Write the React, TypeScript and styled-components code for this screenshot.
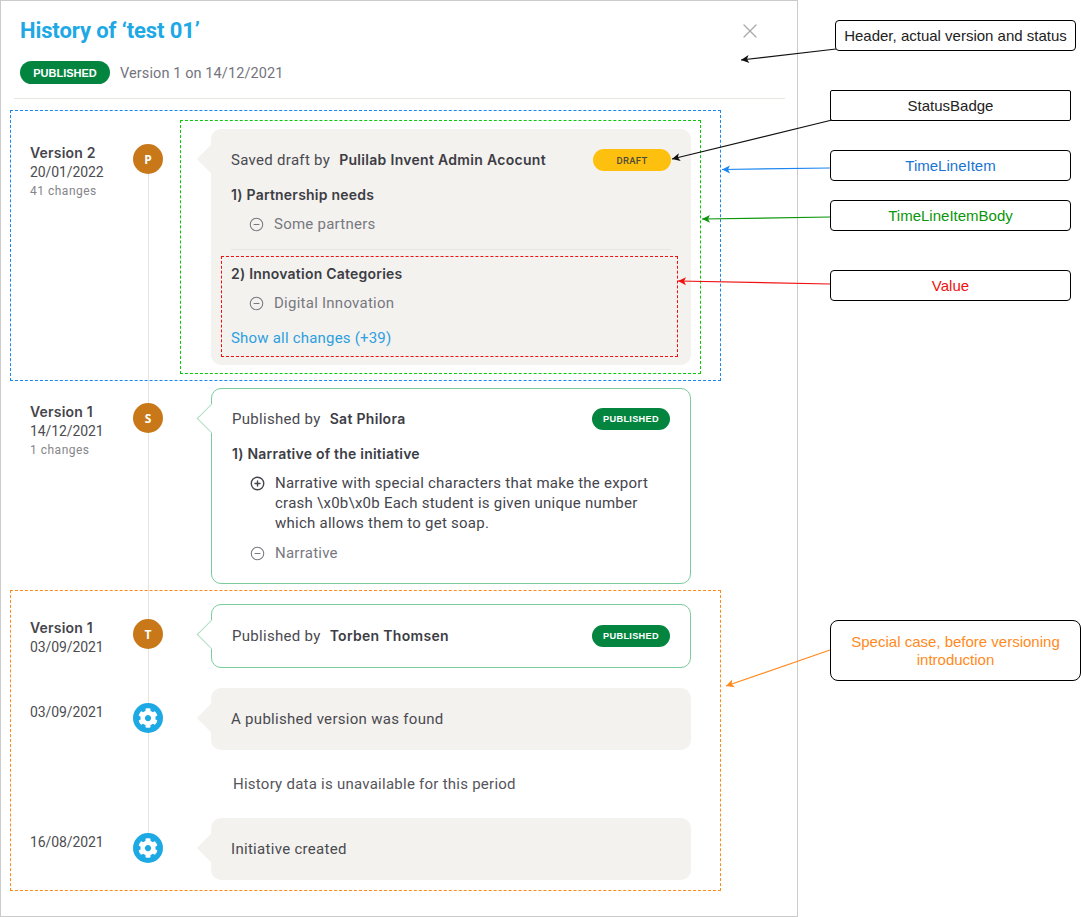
import React from "react";
import styled, { createGlobalStyle } from "styled-components";
import { CircleMinus, CirclePlus, X } from "lucide-react";
import { FaCog } from "react-icons/fa";

const Global = createGlobalStyle`
  html, body { margin: 0; padding: 0; background: #fff; }
  * { box-sizing: border-box; }
`;

const Page = styled.div`
  position: relative;
  width: 1081px;
  height: 917px;
  overflow: hidden;
  background: #fff;
  font-family: Roboto, "Liberation Sans", sans-serif;
  color: #3d3d45;
`;

const Panel = styled.section`
  width: 798px;
  height: 917px;
  box-shadow: inset 0 0 0 1px #cbcbcb;
  padding: 15px 13px 0 14px;
`;

const Header = styled.header`
  height: 84px;
  padding: 0 28px 0 6px;
  border-bottom: 1px solid #e8e6e0;
`;

const TitleRow = styled.div`
  display: flex;
  align-items: center;
  justify-content: space-between;
  height: 32px;
`;

const Title = styled.h1`
  margin: 0;
  font-size: 22px;
  line-height: 32px;
  font-weight: 700;
  letter-spacing: -0.1px;
  color: #20a8e6;
`;

const CloseIcon = styled(X)`
  color: #a9a9a9;
  margin-right: -5px;
`;

const StatusLine = styled.div`
  display: flex;
  align-items: center;
  gap: 10px;
  margin-top: 14px;
`;

const StatusText = styled.span`
  padding-top: 2px;
  font-size: 14.5px;
  letter-spacing: 0.1px;
  color: #74747e;
`;

const Badge = styled.span<{ $draft?: boolean; $large?: boolean }>`
  display: inline-flex;
  align-items: center;
  justify-content: center;
  flex: none;
  width: ${(p) => (p.$large ? "90px" : "78px")};
  height: ${(p) => (p.$large ? "23px" : "22px")};
  border-radius: 12px;
  font-size: ${(p) => (p.$large ? "11px" : p.$draft ? "9.5px" : "9.2px")};
  font-weight: ${(p) => (p.$draft ? 500 : 700)};
  font-family: ${(p) => (p.$draft ? "Roboto, sans-serif" : '"Liberation Sans", sans-serif')};
  background: ${(p) => (p.$draft ? "#fec00f" : "#03853f")};
  color: ${(p) => (p.$draft ? "#4a4a3a" : "#fff")};
`;

const Timeline = styled.div`
  position: relative;
  display: flex;
  flex-direction: column;
  gap: 20px;
  margin: 30px 0 0 16px;
`;

const Line = styled.div`
  position: absolute;
  left: 118px;
  top: 30px;
  bottom: 40px;
  width: 1px;
  background: #e5e3dc;
`;

const Row = styled.article<{ $extraTop?: number }>`
  position: relative;
  display: grid;
  grid-template-columns: 103px 30px 480px;
  align-items: start;
  margin-top: ${(p) => p.$extraTop ?? 0}px;
`;

const Meta = styled.div`
  padding-top: 14px;
`;

const VersionLabel = styled.div`
  font-family: Inter, Roboto, sans-serif;
  font-size: 14px;
  font-weight: 600;
  line-height: 19px;
  letter-spacing: 0.2px;
  color: #45454c;
`;

const DateLabel = styled.div`
  font-size: 14px;
  line-height: 20px;
  letter-spacing: -0.1px;
  color: #4d4d52;
`;

const Changes = styled.div`
  font-size: 12px;
  line-height: 18px;
  letter-spacing: 0.5px;
  color: #85858a;
`;

const Avatar = styled.div<{ $system?: boolean }>`
  display: flex;
  align-items: center;
  justify-content: center;
  width: 30px;
  height: 30px;
  margin-top: 15px;
  border-radius: 50%;
  background: ${(p) => (p.$system ? "#1ca9e4" : "#c87818")};
  color: #fff;
  font-size: 12px;
  font-weight: 700;
  font-family: "Open Sans", sans-serif;
`;

const Card = styled.div<{ $outlined?: boolean }>`
  position: relative;
  grid-column: 3;
  display: flex;
  flex-direction: column;
  justify-content: center;
  width: 480px;
  min-height: ${(p) => (p.$outlined ? "64px" : "62px")};
  margin-left: 48px;
  padding: ${(p) => (p.$outlined ? "19px 20px 20px" : "20px 20px 17px")};
  border-radius: 10px;
  background: ${(p) => (p.$outlined ? "#fff" : "#f3f2ee")};
  border: ${(p) => (p.$outlined ? "1px solid #7ccb9f" : "0")};

  &::before {
    content: "";
    position: absolute;
    left: ${(p) => (p.$outlined ? "-11px" : "-10px")};
    top: ${(p) => (p.$outlined ? "19px" : "20px")};
    width: 20px;
    height: 20px;
    transform: rotate(45deg);
    background: ${(p) => (p.$outlined ? "#fff" : "#f3f2ee")};
    border-left: ${(p) => (p.$outlined ? "1px solid #a9dcbf" : "0")};
    border-bottom: ${(p) => (p.$outlined ? "1px solid #a9dcbf" : "0")};
  }
`;

const NoteCard = styled(Card)`
  padding: 0 20px;
`;

const CardHead = styled.div`
  position: relative;
  display: flex;
  align-items: center;
  justify-content: space-between;
  min-height: 22px;
  font-size: 15px;
  letter-spacing: 0.3px;
  color: #4a4a50;
`;

const Author = styled.b`
  margin-left: 5px;
  font-family: Inter, Roboto, sans-serif;
  font-size: 14px;
  font-weight: 600;
  letter-spacing: 0.3px;
  color: #3d3d45;
`;

const Change = styled.div<{ $divided?: boolean }>`
  ${(p) => (p.$divided ? "margin-top: 15px; border-top: 1px solid #e8e6e0; padding-top: 14px;" : "margin-top: 14px;")}
`;

const ChangeTitle = styled.div`
  font-family: Inter, Roboto, sans-serif;
  font-size: 14px;
  font-weight: 600;
  line-height: 20px;
  letter-spacing: 0.22px;
  color: #3d3d45;
`;

const ValueRow = styled.div<{ $removed?: boolean }>`
  display: flex;
  gap: 10px;
  margin-top: 9px;
  padding-left: 18px;
  font-size: 15px;
  line-height: 20px;
  letter-spacing: 0.25px;
  color: ${(p) => (p.$removed ? "#787881" : "#45454d")};

  svg {
    flex: none;
    margin-top: 3px;
  }

  & + & {
    margin-top: 10px;
  }
`;

const ShowAll = styled.a`
  display: block;
  margin-top: 15px;
  font-size: 15px;
  line-height: 20px;
  letter-spacing: 0.2px;
  color: #2d9fe0;
`;

const Plain = styled.div`
  grid-column: 3;
  margin-left: 70px;
  font-size: 15px;
  line-height: 28px;
  letter-spacing: 0.25px;
  color: #55555b;
`;

const Frame = styled.div<{ $x: number; $y: number; $w: number; $h: number; $c: string }>`
  position: absolute;
  left: ${(p) => p.$x}px;
  top: ${(p) => p.$y}px;
  width: ${(p) => p.$w}px;
  height: ${(p) => p.$h}px;
  border: 1px dashed ${(p) => p.$c};
  pointer-events: none;
`;

const Note = styled.div<{ $x: number; $y: number; $w: number; $h: number; $c: string; $r?: number }>`
  position: absolute;
  left: ${(p) => p.$x}px;
  top: ${(p) => p.$y}px;
  width: ${(p) => p.$w}px;
  height: ${(p) => p.$h}px;
  display: flex;
  align-items: center;
  justify-content: center;
  text-align: center;
  padding: 0 8px;
  background: #fff;
  border: 1px solid #000;
  border-radius: ${(p) => p.$r ?? 4}px;
  font-family: "Liberation Sans", Arial, sans-serif;
  font-size: 15px;
  line-height: 18px;
  color: ${(p) => p.$c};
`;

const Arrows = styled.svg`
  position: absolute;
  left: 0;
  top: 0;
  pointer-events: none;
`;

const arrows = [
  { x1: 836, y1: 49, x2: 741, y2: 60, c: "#111111" },
  { x1: 832, y1: 120, x2: 672, y2: 159, c: "#111111" },
  { x1: 830, y1: 168, x2: 722, y2: 169.5, c: "#1a86f0" },
  { x1: 830, y1: 217, x2: 702, y2: 219, c: "#0a960a" },
  { x1: 830, y1: 284, x2: 678, y2: 281, c: "#f01010" },
  { x1: 830, y1: 650, x2: 726, y2: 686, c: "#ff8a1c" },
];

function arrowHead(a: (typeof arrows)[number]) {
  const angle = Math.atan2(a.y1 - a.y2, a.x1 - a.x2);
  const pt = (l: number, o: number) => {
    const x = a.x2 + l * Math.cos(angle) - o * Math.sin(angle);
    const y = a.y2 + l * Math.sin(angle) + o * Math.cos(angle);
    return `${x},${y}`;
  };
  return [pt(0, 0), pt(8, 4), pt(6, 0), pt(8, -4)].join(" ");
}

const Gear = () => <FaCog size={20} />;
const Removed = () => <CircleMinus size={15} strokeWidth={1.7} />;

export default function App() {
  return (
    <Page>
      <Global />
      <Panel>
        <Header>
          <TitleRow>
            <Title>History of ‘test 01’</Title>
            <CloseIcon size={24} strokeWidth={1.2} />
          </TitleRow>
          <StatusLine>
            <Badge $large>PUBLISHED</Badge>
            <StatusText>Version 1 on 14/12/2021</StatusText>
          </StatusLine>
        </Header>

        <Timeline>
          <Line />
          <Row>
            <Meta>
              <VersionLabel>Version 2</VersionLabel>
              <DateLabel>20/01/2022</DateLabel>
              <Changes>41 changes</Changes>
            </Meta>
            <Avatar>P</Avatar>
            <Card>
              <CardHead>
                <span>
                  Saved draft by <Author>Pulilab Invent Admin Acocunt</Author>
                </span>
                <Badge $draft>DRAFT</Badge>
              </CardHead>
              <Change>
                <ChangeTitle>1) Partnership needs</ChangeTitle>
                <ValueRow $removed>
                  <Removed />
                  Some partners
                </ValueRow>
              </Change>
              <Change $divided>
                <ChangeTitle>2) Innovation Categories</ChangeTitle>
                <ValueRow $removed>
                  <Removed />
                  Digital Innovation
                </ValueRow>
              </Change>
              <ShowAll>Show all changes (+39)</ShowAll>
            </Card>
          </Row>

          <Row $extraTop={3}>
            <Meta>
              <VersionLabel>Version 1</VersionLabel>
              <DateLabel>14/12/2021</DateLabel>
              <Changes>1 changes</Changes>
            </Meta>
            <Avatar>S</Avatar>
            <Card $outlined>
              <CardHead>
                <span>
                  Published by <Author>Sat Philora</Author>
                </span>
                <Badge>PUBLISHED</Badge>
              </CardHead>
              <Change>
                <ChangeTitle>1) Narrative of the initiative</ChangeTitle>
                <ValueRow>
                  <CirclePlus size={15} strokeWidth={2.2} />
                  <span>
                    Narrative with special characters that make the export crash \x0b\x0b Each student is given unique
                    number which allows them to get soap.
                  </span>
                </ValueRow>
                <ValueRow $removed>
                  <Removed />
                  Narrative
                </ValueRow>
              </Change>
            </Card>
          </Row>

          <Row>
            <Meta>
              <VersionLabel>Version 1</VersionLabel>
              <DateLabel>03/09/2021</DateLabel>
            </Meta>
            <Avatar>T</Avatar>
            <Card $outlined>
              <CardHead>
                <span>
                  Published by <Author>Torben Thomsen</Author>
                </span>
                <Badge>PUBLISHED</Badge>
              </CardHead>
            </Card>
          </Row>

          <Row>
            <Meta>
              <DateLabel>03/09/2021</DateLabel>
            </Meta>
            <Avatar $system>
              <Gear />
            </Avatar>
            <NoteCard>
              <CardHead>A published version was found</CardHead>
            </NoteCard>
          </Row>

          <Row>
            <Plain>History data is unavailable for this period</Plain>
          </Row>

          <Row>
            <Meta>
              <DateLabel>16/08/2021</DateLabel>
            </Meta>
            <Avatar $system>
              <Gear />
            </Avatar>
            <NoteCard>
              <CardHead>Initiative created</CardHead>
            </NoteCard>
          </Row>
        </Timeline>
      </Panel>

      <Frame $x={10} $y={110} $w={711} $h={271} $c="#1a86f0" />
      <Frame $x={180} $y={120} $w={521} $h={254} $c="#0ac80a" />
      <Frame $x={221} $y={256} $w={457} $h={101} $c="#f01010" />
      <Frame $x={10} $y={590} $w={711} $h={301} $c="#ff8a1c" />

      <Note $x={835} $y={20} $w={241} $h={31} $c="#222">Header, actual version and status</Note>
      <Note $x={830} $y={90} $w={241} $h={31} $c="#222" $r={2}>StatusBadge</Note>
      <Note $x={830} $y={150} $w={241} $h={31} $c="#1a74d2">TimeLineItem</Note>
      <Note $x={830} $y={200} $w={241} $h={31} $c="#0a960a">TimeLineItemBody</Note>
      <Note $x={830} $y={270} $w={241} $h={31} $c="#f01010">Value</Note>
      <Note $x={830} $y={620} $w={251} $h={61} $c="#ff8a1c" $r={8}>Special case, before versioning introduction</Note>

      <Arrows width={1081} height={917} viewBox="0 0 1081 917">
        {arrows.map((a) => (
          <g key={a.y1}>
            <line x1={a.x1} y1={a.y1} x2={a.x2} y2={a.y2} stroke={a.c} strokeWidth={1.2} />
            <polygon points={arrowHead(a)} fill={a.c} />
          </g>
        ))}
      </Arrows>
    </Page>
  );
}
